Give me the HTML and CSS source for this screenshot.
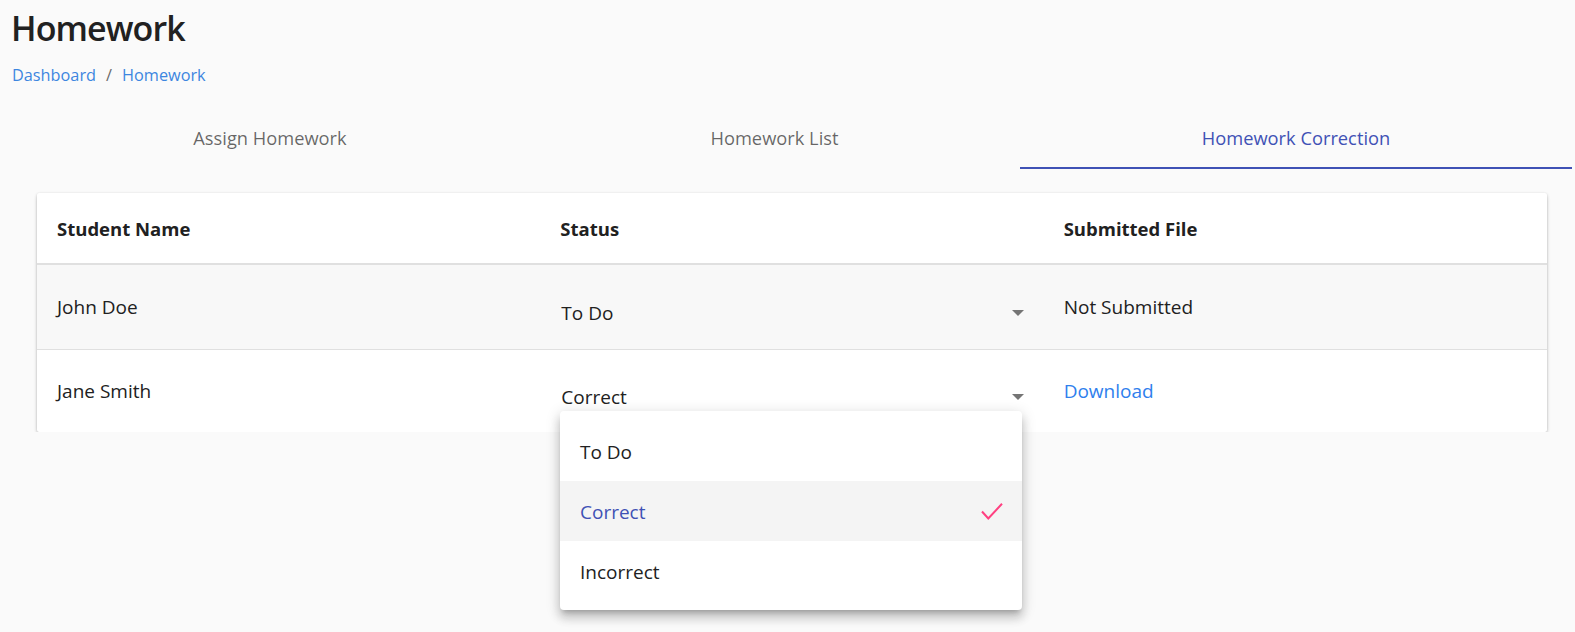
FILE: index.html
```html
<!DOCTYPE html>
<html lang="en">
<head>
<meta charset="utf-8">
<title>Homework</title>
<link rel="stylesheet" href="styles.css">
</head>
<body>
<div class="page">
  <h1 class="title">Homework</h1>
  <nav class="crumbs">
    <a class="crumb" href="#">Dashboard</a>
    <span class="sep">/</span>
    <a class="crumb" href="#">Homework</a>
  </nav>

  <div class="tabs">
    <div class="tab tab-assign">Assign Homework</div>
    <div class="tab tab-list">Homework List</div>
    <div class="tab tab-correction active">Homework Correction</div>
  </div>

  <div class="card">
    <div class="row head">
      <div class="cell">Student Name</div>
      <div class="cell">Status</div>
      <div class="cell">Submitted File</div>
    </div>
    <div class="row body shaded">
      <div class="cell">John Doe</div>
      <div class="cell">
        <div class="select"><span>To Do</span><i class="caret"></i></div>
      </div>
      <div class="cell">Not Submitted</div>
    </div>
    <div class="row body last">
      <div class="cell">Jane Smith</div>
      <div class="cell">
        <div class="select"><span>Correct</span><i class="caret"></i></div>
      </div>
      <div class="cell"><a class="link" href="#">Download</a></div>
    </div>
  </div>
</div>

<ul class="menu">
  <li class="item">To Do</li>
  <li class="item selected"><span>Correct</span>
    <svg class="check" width="22" height="18" viewBox="0 0 22 18"><polyline points="1,9.5 7.3,16.5 21,1.8" fill="none" stroke="#ff4081" stroke-width="2"/></svg>
  </li>
  <li class="item">Incorrect</li>
</ul>
</body>
</html>
```

FILE: styles.css
```css
* { box-sizing: border-box; }

html, body {
  margin: 0;
  padding: 0;
  background: #fafafa;
  font-family: "Open Sans", "Noto Sans", sans-serif;
  color: #212121;
}

.page {
  padding: 8px 3px 0 11px;
}

.title {
  margin: 0;
  font-size: 34px;
  line-height: 40px;
  font-weight: 600;
  color: #212121;
  letter-spacing: -0.9px;
}

.crumbs {
  display: flex;
  align-items: center;
  gap: 9px;
  margin-top: 15px;
  padding-left: 1px;
  font-size: 16.3px;
  line-height: 24px;
}

.crumb {
  color: #3d86e0;
  text-decoration: none;
}

.sep {
  color: #6b6b6b;
  margin: 0 1px;
}

.tabs {
  display: flex;
  margin-top: 22px;
  height: 60px;
}

.tab {
  flex: 0 0 auto;
  display: flex;
  align-items: center;
  justify-content: center;
  font-size: 18.3px;
  color: rgba(0, 0, 0, 0.6);
  border-bottom: 2px solid transparent;
  padding-bottom: 1px;
}

.tab-assign { width: 518px; }
.tab-list { width: 491px; }
.tab-correction { width: 552px; }

.tab.active {
  color: #3f51b5;
  border-bottom-color: #3f51b5;
}

.card {
  margin: 24px 25px 0 26px;
  background: #fff;
  border-radius: 2px;
  box-shadow: 0 2px 4px -1px rgba(0,0,0,0.28), 0 1px 3px 0 rgba(0,0,0,0.12), 0 0 2px 0 rgba(0,0,0,0.06);
}

.row {
  display: grid;
  grid-template-columns: 1fr 1fr 1fr;
  align-items: center;
}

.cell {
  padding: 0 20px;
}

.head {
  height: 72px;
  border-bottom: 2px solid #e0e0e0;
  font-weight: 700;
  font-size: 18.5px;
  padding-top: 1px;
}

.body {
  font-size: 19px;
  border-bottom: 1px solid #e0e0e0;
}

.shaded {
  height: 85px;
  background: #f8f8f8;
}

.last {
  height: 82px;
  border-bottom: none;
}

.select {
  display: flex;
  align-items: center;
  justify-content: space-between;
  margin-top: 12px;
  padding-left: 1px;
}

.caret {
  width: 0;
  height: 0;
  border-left: 6.5px solid transparent;
  border-right: 6.5px solid transparent;
  border-top: 6px solid #757575;
}

.link {
  color: #2f80ed;
  text-decoration: none;
}

.menu {
  position: absolute;
  left: 560px;
  top: 411px;
  width: 462px;
  margin: 0;
  padding: 10px 0 9px;
  list-style: none;
  background: #fff;
  border-radius: 4px;
  box-shadow: 0 5px 5px -3px rgba(0,0,0,0.2), 0 8px 10px 1px rgba(0,0,0,0.14), 0 3px 14px 2px rgba(0,0,0,0.12);
}

.item {
  height: 60px;
  display: flex;
  align-items: center;
  justify-content: space-between;
  padding: 2px 20px 0;
  font-size: 19px;
  color: #212121;
}

.item.selected {
  background: #f4f4f4;
  color: #3f51b5;
}

.check {
  display: block;
  margin-right: -1px;
  margin-top: -2px;
}
```
